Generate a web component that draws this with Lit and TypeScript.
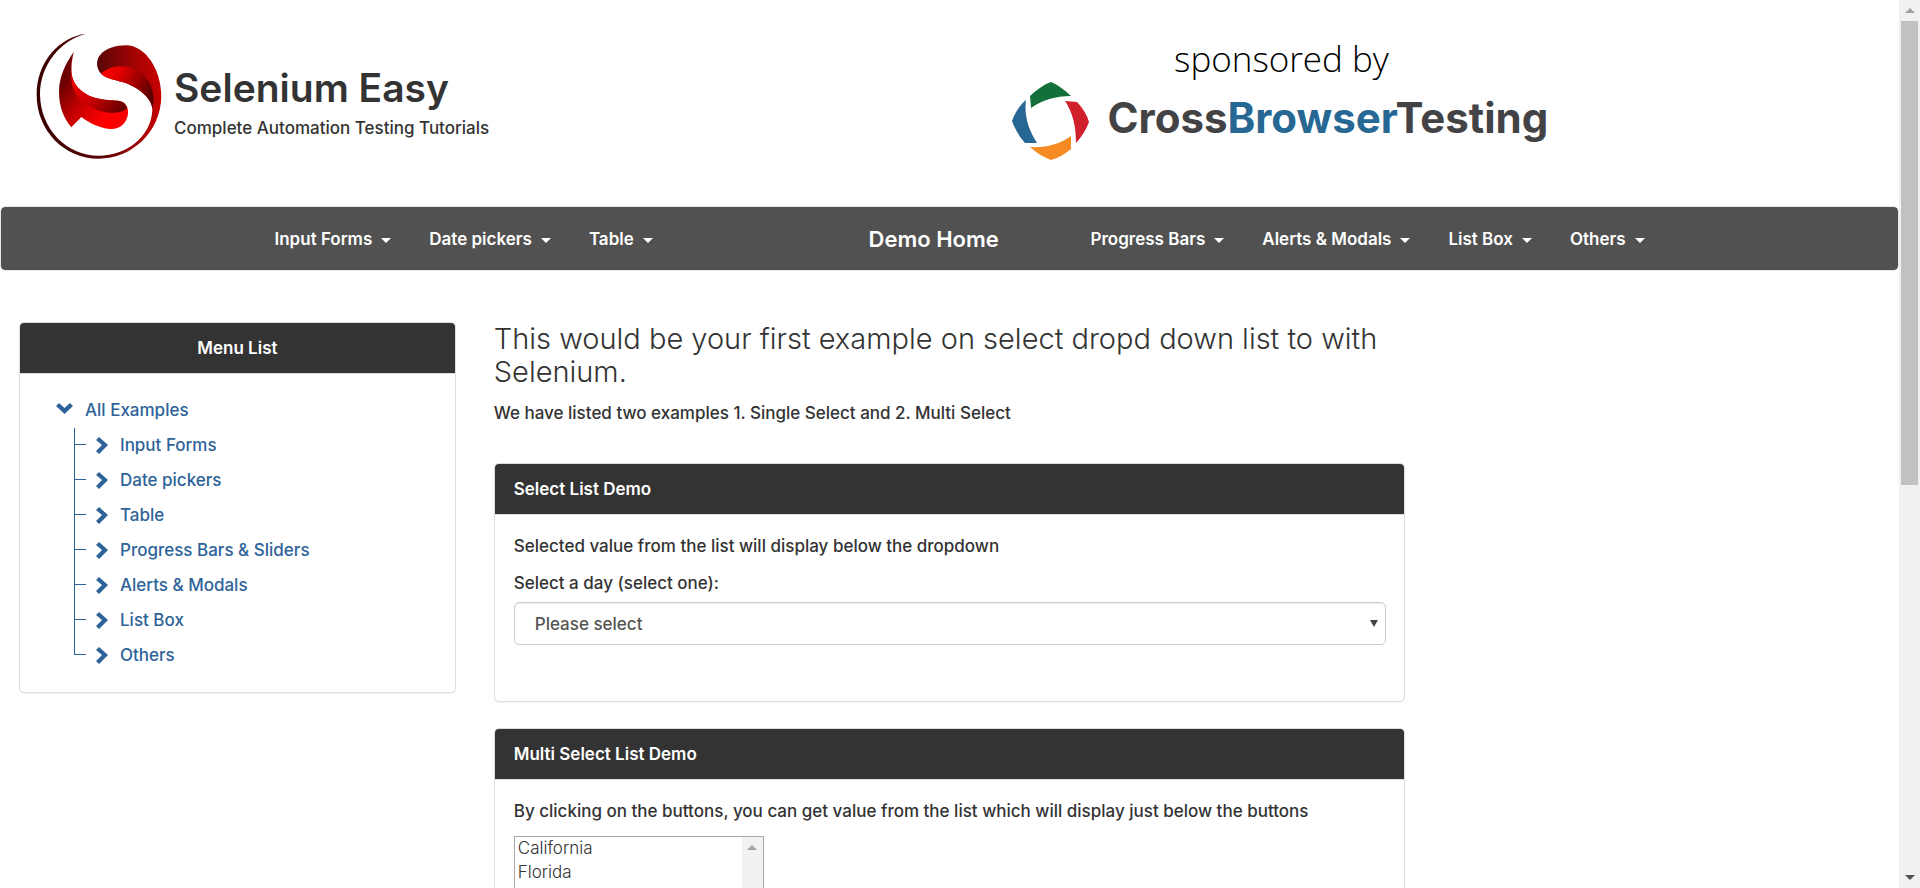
import { LitElement, html, css, svg } from "lit";
import { customElement, state } from "lit/decorators.js";

const NAV_LEFT = ["Input Forms", "Date pickers", "Table"];
const NAV_RIGHT = ["Progress Bars", "Alerts & Modals", "List Box", "Others"];
const TREE = ["Input Forms", "Date pickers", "Table", "Progress Bars & Sliders", "Alerts & Modals", "List Box", "Others"];
const DAYS = ["Sunday", "Monday", "Tuesday", "Wednesday", "Thursday", "Friday", "Saturday"];
const STATES = ["California", "Florida", "New Jersey", "New York", "Ohio", "Texas", "Pennsylvania", "Washington"];

@customElement("app-root")
export class AppRoot extends LitElement {
  @state() private day = "";

  static styles = css`
    :host {
      display: grid;
      grid-template-columns: minmax(0, 1fr) 21px;
      height: 100vh;
      overflow: hidden;
      background: #fff;
      color: #333;
      font: 500 17px/25px Inter, "Open Sans", sans-serif;
    }
    * { box-sizing: border-box; }
    h1, h3, h4, p, ul { margin: 0; padding: 0; }
    ul { list-style: none; }
    a { color: inherit; text-decoration: none; }
    .page { overflow: hidden; }

    .header {
      display: grid;
      grid-template-columns: 1fr 1fr;
      height: 206px;
      padding: 0 18px;
    }
    .brand { display: flex; align-items: flex-start; gap: 12px; padding: 33px 0 0 18px; }
    .brand-logo { width: 126px; height: 126px; flex: none; }
    .brand-text { padding-top: 33px; }
    .brand h1 { font-size: 39px; line-height: 44px; font-weight: 600; }
    .brand p { margin-top: 6px; }
    .sponsor { display: flex; flex-direction: column; padding: 36px 0 0 62px; width: 602px; }
    .sponsor-by { color: #000; font: 300 35px/46px "Open Sans", sans-serif; text-align: center; }
    .sponsor-row { display: flex; align-items: flex-start; gap: 18px; }
    .sponsor-mark { width: 78px; height: 78px; flex: none; }
    .sponsor-name { padding-top: 11px; color: #434345; font-size: 42px; line-height: 50px; font-weight: 700; }
    .blue { color: #266793; }

    .navbar {
      border: 1px solid #e7e7e7;
      border-radius: 5px;
      background: #515151;
      background-clip: padding-box;
      color: #fff;
      font-weight: 600;
    }
    .nav-inner {
      display: grid;
      grid-template-columns: 594px 222px 1fr;
      align-items: center;
      max-width: 1462px;
      height: 63px;
      margin: 0 auto;
      padding: 2px 0 0 56px;
    }
    .nav-list { display: flex; gap: 38px; }
    .nav-list a { display: flex; align-items: center; gap: 9px; white-space: nowrap; }
    .caret { border: 5px solid transparent; border-top-color: #fff; border-bottom: 0; margin-top: 2px; }
    .nav-home { font-size: 22px; white-space: nowrap; }

    .columns {
      display: grid;
      grid-template-columns: 3fr 6fr 3fr;
      align-items: start;
      padding-top: 51px;
    }
    .col { padding: 0 19px; }
    .panel {
      border: 1px solid #ddd;
      border-radius: 5px;
      box-shadow: 0 1px 1px rgba(0, 0, 0, 0.05);
      background: #fff;
    }
    .panel + .panel { margin-top: 26px; }
    .panel-heading {
      padding: 13px 19px 12px;
      border-bottom: 1px solid #ddd;
      border-radius: 4px 4px 0 0;
      background: #333;
      background-clip: padding-box;
      color: #fff;
      font-weight: 600;
    }
    .panel-heading.center { text-align: center; }
    .panel-body { padding: 19px 18px 19px 19px; }

    .tree { padding: 0 18px 0 17px; color: #2e6399; }
    .tree a { display: flex; align-items: center; height: 35px; gap: 12px; }
    .tree-root svg { width: 17px; height: 17px; }
    .tree-list { padding-left: 18px; }
    .tree-item {
      padding-left: 22px;
      background:
        linear-gradient(#2e6399, #2e6399) 0 0 / 1px 100% no-repeat,
        linear-gradient(#2e6399, #2e6399) 0 16px / 12px 1px no-repeat;
    }
    .tree-item:last-child {
      background:
        linear-gradient(#2e6399, #2e6399) 0 0 / 1px 17px no-repeat,
        linear-gradient(#2e6399, #2e6399) 0 16px / 12px 1px no-repeat;
    }
    .tree-item svg { width: 12px; height: 17px; }

    .intro { font-size: 29px; line-height: 33px; font-weight: 300; }
    .lead { margin: 13px 0 37px; }
    .field { display: block; margin-top: 12px; }
    .select-box { display: grid; margin: 6px 0 37px; }
    .select-box select, .select-box .arrow { grid-area: 1 / 1; }
    .day {
      appearance: none;
      width: 100%;
      height: 43px;
      padding: 2px 20px 0;
      border: 1px solid #ccc;
      border-radius: 5px;
      box-shadow: inset 0 1px 1px rgba(0, 0, 0, 0.075);
      background: #fff;
      color: #555;
      font: inherit;
    }
    .arrow {
      justify-self: end;
      align-self: center;
      margin-right: 8px;
      border: 4px solid transparent;
      border-top: 7px solid #444;
      border-bottom: 0;
      pointer-events: none;
    }
    .listbox { display: grid; grid-template-columns: 1fr 21px; width: 250px; margin-top: 12px; border: 1px solid #a9a9a9; }
    .states { height: 194px; padding: 1px 0; border: 0; outline: 0; background: #fff; color: #333; scrollbar-width: none; }
    .states option { min-height: 24px; padding: 0 3px; font: 300 17px/24px Inter, "Open Sans", sans-serif; }

    .scrollbar { display: flex; flex-direction: column; align-items: center; background: #f1f1f1; }
    .scroll-step { display: flex; align-items: center; justify-content: center; height: 21px; flex: none; }
    .up { border: 5px solid transparent; border-bottom-color: #a3a3a3; border-top: 0; }
    .down { border: 5px solid transparent; border-top-color: #505050; border-bottom: 0; }
    .thumb { width: 17px; background: #c1c1c1; flex: 464; }
    .track { flex: 382; }
  `;

  private brandLogo = svg`
    <svg class="brand-logo" viewBox="50 40 378 378" aria-hidden="true">
      <defs>
        <linearGradient id="ring" gradientUnits="userSpaceOnUse" x1="60" y1="200" x2="426" y2="180">
          <stop offset="0" stop-color="#3a0000"/><stop offset=".5" stop-color="#5c0606"/><stop offset=".8" stop-color="#a60303"/><stop offset="1" stop-color="#c80000"/>
        </linearGradient>
        <linearGradient id="foldTop" gradientUnits="userSpaceOnUse" x1="255" y1="150" x2="400" y2="215">
          <stop offset="0" stop-color="#ff0000"/><stop offset=".3" stop-color="#e00000"/><stop offset="1" stop-color="#5a0000"/>
        </linearGradient>
        <linearGradient id="tail" gradientUnits="userSpaceOnUse" x1="125" y1="200" x2="250" y2="290">
          <stop offset="0" stop-color="#6d0000"/><stop offset=".5" stop-color="#c40000"/><stop offset="1" stop-color="#fa0000"/>
        </linearGradient>
        <linearGradient id="foldTail" gradientUnits="userSpaceOnUse" x1="160" y1="170" x2="322" y2="265">
          <stop offset="0" stop-color="#f00000"/><stop offset=".45" stop-color="#c60000"/><stop offset="1" stop-color="#5e0000"/>
        </linearGradient>
      </defs>
      <path fill="url(#ring)" d="M320 77C378 77 426 150 426 230C424 338 338 417 238 417C136 417 52 334 52 225C52 125 120 52 200 42C124 62 62 134 62 225C64 328 142 408 238 408C322 408 396 350 399 270C398 232 350 200 312 188C285 179 262 178 245 162C228 142 231 118 243 105C260 86 290 77 320 77Z"/>
      <path fill="url(#foldTop)" d="M245 162C264 144 296 136 328 142C372 152 402 190 403 240C402 250 401 258 399 268C398 232 350 200 312 188C285 179 262 178 245 162Z"/>
      <path fill="url(#tail)" d="M163 97C152 145 152 175 175 203C200 232 240 242 295 243C318 244 328 262 326 282C322 312 300 330 272 328C240 325 210 310 186 292L156 323C133 295 119 262 119 215C119 170 140 130 163 97Z"/>
      <path fill="url(#foldTail)" d="M163 97C152 145 152 175 175 203C200 232 240 242 295 243C310 244 320 252 323 266C310 280 282 282 258 278C215 270 178 246 162 208C152 178 152 135 163 97Z"/>
    </svg>`;

  private sponsorMark = svg`
    <svg class="sponsor-mark" viewBox="0 0 78 78" aria-hidden="true">
      <path fill="#14703a" d="M18 14C24 8 31 3 39 0C46 3 53 8 59 14C44 14 30 18 19 26Z"/>
      <path fill="#d0202b" d="M53 19L65 20C71 26 75 33 77 40C74 48 70 54 64 61C64 45 61 31 53 19Z"/>
      <path fill="#f68b23" d="M18 65C34 66 48 62 59 54L59 67C53 72 46 76 39 78C31 75 25 71 18 65Z"/>
      <path fill="#266793" d="M14 18C12 33 16 47 25 61L13 61C7 54 3 47 0 39C3 31 7 24 14 18Z"/>
    </svg>`;

  private chevronDown = svg`<svg viewBox="0 0 17 17" aria-hidden="true"><path fill="#2e6399" d="M0 4L3 1L8.5 6L14 1L17 4L8.5 12Z"/></svg>`;
  private chevronRight = svg`<svg viewBox="0 0 12 17" aria-hidden="true"><path fill="#2e6399" d="M0 3L3 0L12 8L3 17L0 14L6 8Z"/></svg>`;

  private navList(items: string[]) {
    return html`<ul class="nav-list">${items.map((t) => html`<li><a href="#">${t}<span class="caret"></span></a></li>`)}</ul>`;
  }

  private onDay(e: Event) {
    this.day = (e.target as HTMLSelectElement).value;
  }

  render() {
    return html`
      <div class="page">
        <header class="header">
          <div class="brand">
            ${this.brandLogo}
            <div class="brand-text">
              <h1>Selenium Easy</h1>
              <p>Complete Automation Testing Tutorials</p>
            </div>
          </div>
          <div class="sponsor">
            <span class="sponsor-by">sponsored by</span>
            <a class="sponsor-row" href="#">
              ${this.sponsorMark}
              <span class="sponsor-name">Cross<span class="blue">Browser</span>Testing</span>
            </a>
          </div>
        </header>

        <nav class="navbar">
          <div class="nav-inner">
            ${this.navList(NAV_LEFT)}
            <a class="nav-home" href="#">Demo Home</a>
            ${this.navList(NAV_RIGHT)}
          </div>
        </nav>

        <div class="columns">
          <aside class="col">
            <section class="panel">
              <h4 class="panel-heading center">Menu List</h4>
              <div class="panel-body">
                <div class="tree">
                  <a class="tree-root" href="#">${this.chevronDown}All Examples</a>
                  <ul class="tree-list">
                    ${TREE.map((t) => html`<li class="tree-item"><a href="#">${this.chevronRight}${t}</a></li>`)}
                  </ul>
                </div>
              </div>
            </section>
          </aside>

          <main class="col">
            <h3 class="intro">This would be your first example on select dropd down list to with Selenium.</h3>
            <p class="lead">We have listed two examples 1. Single Select and 2. Multi Select</p>
            <section class="panel">
              <h4 class="panel-heading">Select List Demo</h4>
              <div class="panel-body">
                <p>Selected value from the list will display below the dropdown</p>
                <label class="field" for="day">Select a day (select one):</label>
                <div class="select-box">
                  <select class="day" id="day" .value=${this.day} @change=${this.onDay}>
                    <option value="">Please select</option>
                    ${DAYS.map((d) => html`<option value=${d}>${d}</option>`)}
                  </select>
                  <span class="arrow"></span>
                </div>
              </div>
            </section>
            <section class="panel">
              <h4 class="panel-heading">Multi Select List Demo</h4>
              <div class="panel-body">
                <label for="states">By clicking on the buttons, you can get value from the list which will display just below the buttons</label>
                <div class="listbox">
                  <select class="states" id="states" multiple size="8">
                    ${STATES.map((s) => html`<option>${s}</option>`)}
                  </select>
                  <div class="scrollbar"><div class="scroll-step"><span class="up"></span></div></div>
                </div>
              </div>
            </section>
          </main>
        </div>
      </div>

      <div class="scrollbar" aria-hidden="true">
        <div class="scroll-step"><span class="up"></span></div>
        <div class="thumb"></div>
        <div class="track"></div>
        <div class="scroll-step"><span class="down"></span></div>
      </div>
    `;
  }
}
